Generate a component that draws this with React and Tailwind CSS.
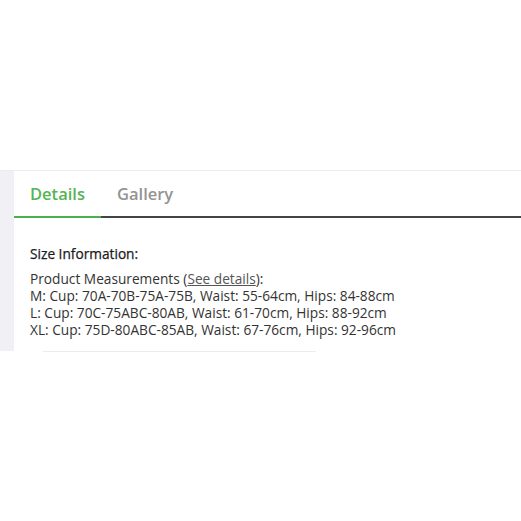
import React from 'react';

const rows = [
  'M: Cup: 70A-70B-75A-75B, Waist: 55-64cm, Hips: 84-88cm',
  'L: Cup: 70C-75ABC-80AB, Waist: 61-70cm, Hips: 88-92cm',
  'XL: Cup: 75D-80ABC-85AB, Waist: 67-76cm, Hips: 92-96cm',
];

const App = () => {
  return (
    <div className="w-[521px] h-[521px] bg-white overflow-hidden" style={{ fontFamily: '"Open Sans", sans-serif' }}>
      <div className="h-[170px]" />
      <div className="flex border-t border-[#ececec]">
        <div className="w-[14px] h-[180px] bg-[#f1f1f5]" />
        <div className="flex-1">
          {/* Tabs */}
          <div className="flex pt-[11px]">
            <div className="w-[87px] border-b-2 border-[#4cb04c] pl-[16px] pb-[10px]">
              <span className="text-[16.5px] leading-[24px] font-semibold text-[#55b455]">Details</span>
            </div>
            <div className="flex-1 border-b-2 border-[#444444] pl-[16px] pb-[10px]">
              <span className="text-[16.5px] leading-[24px] font-semibold text-[#939393]">Gallery</span>
            </div>
          </div>
          {/* Content */}
          <div className="pl-[16px] pt-[26px] text-[#333333]">
            <p className="text-[13.7px] leading-[20px] text-[#1a1a1a] [-webkit-text-stroke:0.25px_#1a1a1a]">Size Information:</p>
            <div className="mt-[6px] text-[13.7px] leading-[17px]">
              <p>
                Product Measurements (<span className="underline text-[#555555]">See details</span>):
              </p>
              {rows.map((r) => (
                <p key={r}>{r}</p>
              ))}
            </div>
          </div>
        </div>
      </div>
      <div className="ml-[43px] w-[273px] h-px bg-[#ececec]" />
    </div>
  );
};

export default App;
